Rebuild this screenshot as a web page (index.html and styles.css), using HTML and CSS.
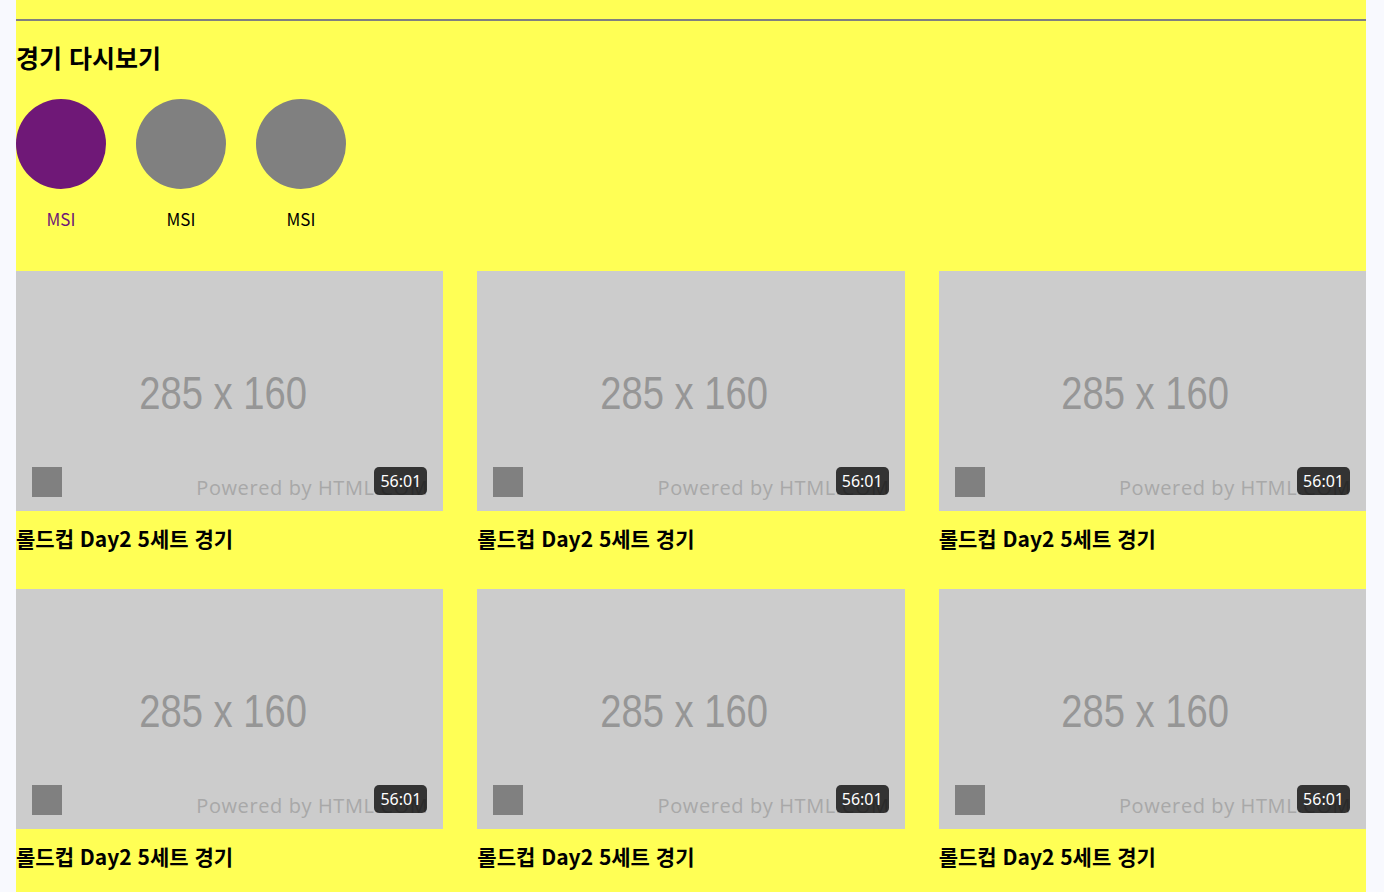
FILE: index.html
```html
<!DOCTYPE html>
<html lang="ko">
<head>
    <meta charset="UTF-8">
    <meta name="viewport" content="width=device-width, initial-scale=1.0">
    <title>경기 다시보기</title>
    <link rel="stylesheet" href="styles.css">
</head>
<body>
    <div class="container">
        <div class="divider"></div>

        <h2 class="section-title">경기 다시보기</h2>

        <div class="league-list">
            <div class="league active">
                <div class="league-logo"></div>
                <span class="league-name">MSI</span>
            </div>
            <div class="league">
                <div class="league-logo"></div>
                <span class="league-name">MSI</span>
            </div>
            <div class="league">
                <div class="league-logo"></div>
                <span class="league-name">MSI</span>
            </div>
        </div>

        <div class="video-grid">
            <div class="video-card">
                <div class="thumb">
                    <span class="thumb-size">285 x 160</span>
                    <span class="thumb-credit">Powered by HTML.COM</span>
                    <span class="thumb-icon"></span>
                    <span class="duration">56:01</span>
                </div>
                <p class="video-title">롤드컵 Day2 5세트 경기</p>
            </div>
            <div class="video-card">
                <div class="thumb">
                    <span class="thumb-size">285 x 160</span>
                    <span class="thumb-credit">Powered by HTML.COM</span>
                    <span class="thumb-icon"></span>
                    <span class="duration">56:01</span>
                </div>
                <p class="video-title">롤드컵 Day2 5세트 경기</p>
            </div>
            <div class="video-card">
                <div class="thumb">
                    <span class="thumb-size">285 x 160</span>
                    <span class="thumb-credit">Powered by HTML.COM</span>
                    <span class="thumb-icon"></span>
                    <span class="duration">56:01</span>
                </div>
                <p class="video-title">롤드컵 Day2 5세트 경기</p>
            </div>
            <div class="video-card">
                <div class="thumb">
                    <span class="thumb-size">285 x 160</span>
                    <span class="thumb-credit">Powered by HTML.COM</span>
                    <span class="thumb-icon"></span>
                    <span class="duration">56:01</span>
                </div>
                <p class="video-title">롤드컵 Day2 5세트 경기</p>
            </div>
            <div class="video-card">
                <div class="thumb">
                    <span class="thumb-size">285 x 160</span>
                    <span class="thumb-credit">Powered by HTML.COM</span>
                    <span class="thumb-icon"></span>
                    <span class="duration">56:01</span>
                </div>
                <p class="video-title">롤드컵 Day2 5세트 경기</p>
            </div>
            <div class="video-card">
                <div class="thumb">
                    <span class="thumb-size">285 x 160</span>
                    <span class="thumb-credit">Powered by HTML.COM</span>
                    <span class="thumb-icon"></span>
                    <span class="duration">56:01</span>
                </div>
                <p class="video-title">롤드컵 Day2 5세트 경기</p>
            </div>
        </div>
    </div>
</body>
</html>
```

FILE: styles.css
```css
body {
    margin: 0;
    background-color: #f8f9fe;
    font-family: "Noto Sans CJK KR", "Noto Sans", sans-serif;
    color: #000;
}
.container {
    width: 1350px;
    margin-left: 16px;
    padding-top: 19px;
    padding-bottom: 40px;
    background-color: #ffff55;
}
.divider {
    height: 2px;
    background-color: #808080;
}
.section-title {
    margin: 18px 0 0;
    font-size: 25px;
    line-height: 36px;
    font-weight: bold;
}
.league-list {
    display: flex;
    gap: 30px;
    margin-top: 24px;
}
.league {
    width: 90px;
    display: flex;
    flex-direction: column;
    align-items: center;
}
.league-logo {
    width: 90px;
    height: 90px;
    border-radius: 50%;
    background-color: #808080;
}
.league-name {
    margin-top: 18px;
    font-size: 17px;
    line-height: 24px;
}
.league.active .league-logo {
    background-color: #6f1877;
}
.league.active .league-name {
    color: #6f1877;
}
.video-grid {
    display: grid;
    grid-template-columns: repeat(3, 1fr);
    column-gap: 34px;
    row-gap: 36px;
    margin-top: 40px;
}
.thumb {
    position: relative;
    height: 240px;
    background-color: #cccccc;
    display: flex;
    justify-content: center;
    align-items: center;
    overflow: hidden;
}
.thumb-size {
    display: inline-block;
    margin: 4px 14px 0 0;
    font-family: "Liberation Sans", Arial, sans-serif;
    font-size: 46px;
    color: #969696;
    transform: scaleX(0.83);
    white-space: nowrap;
}
.thumb-credit {
    position: absolute;
    right: 15px;
    bottom: 10px;
    font-family: "Open Sans", sans-serif;
    font-size: 20px;
    letter-spacing: 0.6px;
    color: #a8a8a8;
    white-space: nowrap;
}
.thumb-icon {
    position: absolute;
    left: 16px;
    bottom: 14px;
    width: 30px;
    height: 30px;
    background-color: #808080;
}
.duration {
    position: absolute;
    right: 16px;
    bottom: 16px;
    height: 28px;
    padding: 0 6px;
    border-radius: 5px;
    background-color: rgba(0, 0, 0, 0.75);
    color: #fff;
    font-family: "Noto Sans", sans-serif;
    font-size: 16px;
    line-height: 28px;
}
.video-title {
    margin: 12px 0 0;
    font-size: 21px;
    line-height: 30px;
    font-weight: bold;
}
```
